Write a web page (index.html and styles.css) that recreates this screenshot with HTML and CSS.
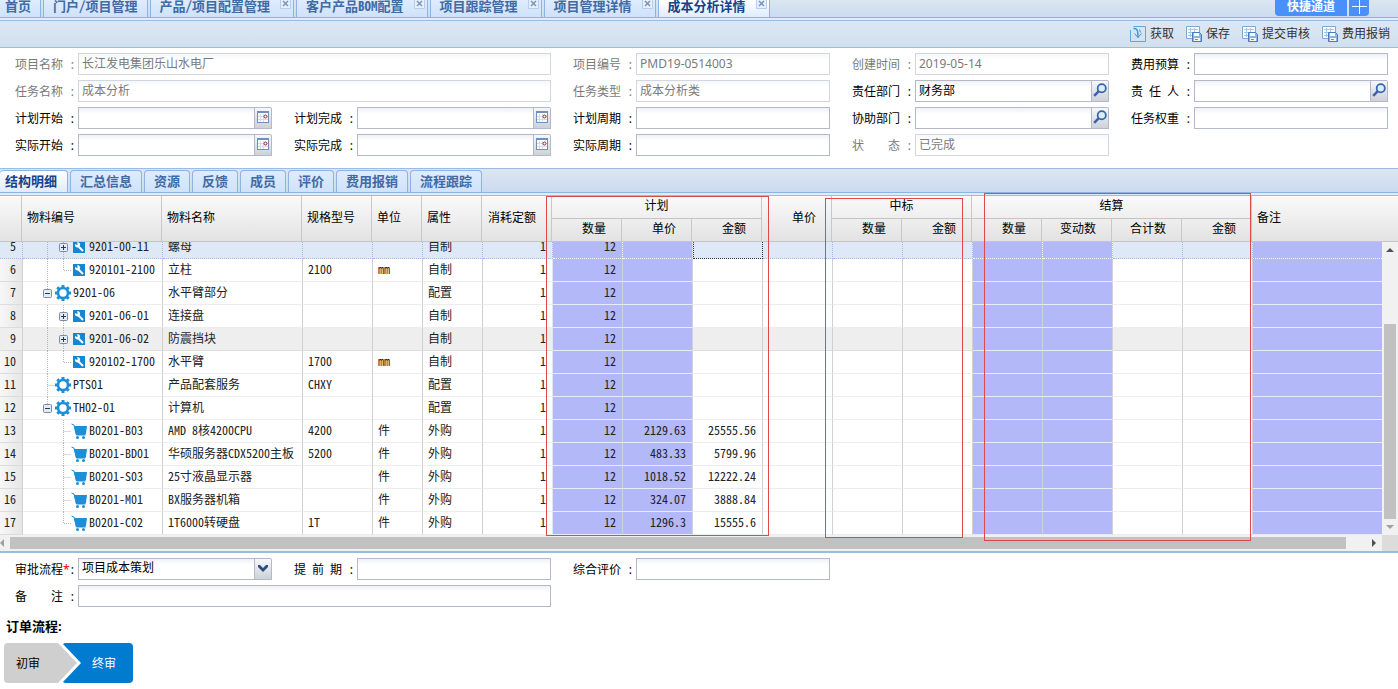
FILE: index.html
```html
<!DOCTYPE html>
<html lang="zh-CN">
<head>
    <meta charset="UTF-8">
    <meta name="viewport" content="width=device-width, initial-scale=1.0">
    <title>成本分析详情</title>
    <link rel="stylesheet" href="styles.css">
</head>
<body>
<svg class="sprite" aria-hidden="true">
    <!-- tree lines, one row high -->
    <symbol id="t-line" viewBox="0 0 16 23"><path class="dots" d="M8.5 0V23"/></symbol>
    <symbol id="t-elbow" viewBox="0 0 16 23"><path class="dots" d="M8.5 0V23M8.5 11.5H16"/></symbol>
    <symbol id="t-end" viewBox="0 0 16 23"><path class="dots" d="M8.5 0V11.5H16"/></symbol>
    <symbol id="t-plus" viewBox="0 0 16 23"><path class="dots" d="M8.5 0V23"/><rect class="box" x="4.5" y="7.5" width="8" height="8" rx="1"/><path class="sign" d="M6 11.5H11M8.5 9V14"/></symbol>
    <symbol id="t-minus" viewBox="0 0 16 23"><path class="dots" d="M8.5 0V7"/><rect class="box" x="4.5" y="7.5" width="8" height="8" rx="1"/><path class="sign" d="M6 11.5H11"/></symbol>
    <!-- node icons -->
    <symbol id="i-gear" viewBox="0 0 16 16"><g fill="none" stroke="#1c8fd6"><circle cx="8" cy="8" r="5" stroke-width="2.600"/><path d="M8 0v3M8 13v3M0 8h3M13 8h3M2.300 2.300l2.200 2.200M11.500 11.500l2.200 2.200M2.300 13.700l2.200-2.200M11.500 4.500l2.200-2.200" stroke-width="3"/></g></symbol>
    <symbol id="i-wrench" viewBox="0 0 16 16"><rect x="2" y="2" width="12" height="12" fill="#1686d0"/><path d="M7.500 7.500L12 12" stroke="#fff" stroke-width="2"/><path d="M4 5l2 1 .8-.8L6 3.400c2.400-.3 3.600 1.200 3 3.200L7 8.600C5.200 8.800 3.600 7.400 4 5z" fill="#fff"/></symbol>
    <symbol id="i-cart" viewBox="0 0 16 16"><path d="M.5 1L3 2l2.500 10h9" fill="none" stroke="#1c8fd6"/><path d="M3 3H16L15 10.500 14 12H5z" fill="#1c8fd6"/><circle cx="6.500" cy="14.500" r="1.500" fill="#1c8fd6"/><circle cx="12.500" cy="14.500" r="1.500" fill="#1c8fd6"/></symbol>
    <!-- buttons -->
    <symbol id="i-fetch" viewBox="0 0 16 16"><path d="M3.500.5H15.500v15H.5V4" fill="none" stroke="#5aaade"/><path d="M3.500 2.500C7 2 8 4 8 11.500" fill="none" stroke="#3b97d6" stroke-width="1.500"/><path d="M4.500 7.500L8 11.500 11.500 7.500M9.500 3.500l1 3" fill="none" stroke="#3b97d6"/></symbol>
    <symbol id="i-save" viewBox="0 0 16 16"><path d="M.5.5h13v12H.5z" fill="#f8fbff" stroke="#7fa9d3"/><path d="M2 3.500h10M2 6.500h8M2 9.500h6M4.500 2v9M8.500 2v5" stroke="#a9c6e2"/><path d="M6.500 6.500h7l2 2v7h-9z" fill="#8fb4e4" stroke="#4a78bd"/><path d="M8 7h5v3H8z" fill="#fff"/><path d="M8 12h6v3H8z" fill="#f2f8e8"/><path d="M9 13h3v1H9z" fill="#6fb04c"/></symbol>
    <symbol id="i-date" viewBox="0 0 12 12"><rect x=".5" y=".5" width="11" height="11" fill="#fff" stroke="#6f8fbd"/><path d="M0 1h12" stroke="#6f8fbd" stroke-width="2"/><path d="M1 5.500h10M1 8.500h10M3.500 3v8M6.500 3v8" stroke="#d5dbe6"/><circle cx="8.500" cy="5.500" r="1.500" fill="#fff" stroke="#9c1c1c"/></symbol>
    <symbol id="i-search" viewBox="0 0 12 12"><path d="M5 7L1 11" stroke="#3c62a8" stroke-width="2.200"/><circle cx="7.500" cy="4.500" r="3.500" fill="#dcecfa" stroke="#3564ae" stroke-width="1.500"/></symbol>
    <symbol id="i-down" viewBox="0 0 12 12"><path d="M1 3h2l3 3 3-3h2v2L6 10 1 5z" fill="#2c4d80"/></symbol>
    <symbol id="i-close" viewBox="0 0 11 9"><path d="M.5 0V8.500H10.500V0" fill="#e6f0fd" stroke="#b6cdec"/><path d="M3 1l5 5M8 1L3 6" stroke="#7d93b5" stroke-width="1.500"/></symbol>
</svg>

<nav class="page-tabs">
    <a class="tab" href="#">首页</a>
    <a class="tab" href="#">门户/项目管理</a>
    <a class="tab closable" href="#">产品/项目配置管理<svg class="close"><use href="#i-close"/></svg></a>
    <a class="tab closable" href="#">客户产品BOM配置<svg class="close"><use href="#i-close"/></svg></a>
    <a class="tab closable" href="#">项目跟踪管理<svg class="close"><use href="#i-close"/></svg></a>
    <a class="tab closable" href="#">项目管理详情<svg class="close"><use href="#i-close"/></svg></a>
    <a class="tab closable active" href="#">成本分析详情<svg class="close"><use href="#i-close"/></svg></a>
    <div class="shortcut">
        <button type="button" class="shortcut-main">快捷通道</button>
        <button type="button" class="shortcut-add" aria-label="添加"><svg viewBox="0 0 15 15"><path d="M0 6.500H15M7.500 0V14" stroke="#fff"/></svg></button>
    </div>
</nav>
<div class="tab-strip-line"></div>

<div class="toolbar">
    <button type="button"><svg><use href="#i-fetch"/></svg>获取</button>
    <button type="button"><svg><use href="#i-save"/></svg>保存</button>
    <button type="button"><svg><use href="#i-save"/></svg>提交审核</button>
    <button type="button"><svg><use href="#i-save"/></svg>费用报销</button>
</div>

<form class="form main-form">
    <div class="field wide disabled"><label for="pname"><span>项目名称</span><b>:</b></label><input id="pname" type="text" value="长江发电集团乐山水电厂" disabled></div>
    <div class="field disabled"><label for="pcode"><span>项目编号</span><b>:</b></label><input id="pcode" type="text" value="PMD19-0514003" disabled></div>
    <div class="field disabled"><label for="created"><span>创建时间</span><b>:</b></label><input id="created" type="text" value="2019-05-14" disabled></div>
    <div class="field"><label for="budget"><span>费用预算</span><b>:</b></label><input id="budget" type="text"></div>

    <div class="field wide disabled"><label for="tname"><span>任务名称</span><b>:</b></label><input id="tname" type="text" value="成本分析" disabled></div>
    <div class="field disabled"><label for="ttype"><span>任务类型</span><b>:</b></label><input id="ttype" type="text" value="成本分析类" disabled></div>
    <div class="field"><label for="dept"><span>责任部门</span><b>:</b></label><input id="dept" type="text" value="财务部"><button type="button" class="trigger search" aria-label="查找"><svg><use href="#i-search"/></svg></button></div>
    <div class="field"><label for="owner"><span>责 任 人</span><b>:</b></label><input id="owner" type="text"><button type="button" class="trigger search" aria-label="查找"><svg><use href="#i-search"/></svg></button></div>

    <div class="field"><label for="pstart"><span>计划开始</span><b>:</b></label><input id="pstart" type="text"><button type="button" class="trigger" aria-label="选择日期"><svg><use href="#i-date"/></svg></button></div>
    <div class="field"><label for="pend"><span>计划完成</span><b>:</b></label><input id="pend" type="text"><button type="button" class="trigger" aria-label="选择日期"><svg><use href="#i-date"/></svg></button></div>
    <div class="field"><label for="pcycle"><span>计划周期</span><b>:</b></label><input id="pcycle" type="text"></div>
    <div class="field"><label for="assist"><span>协助部门</span><b>:</b></label><input id="assist" type="text"><button type="button" class="trigger search" aria-label="查找"><svg><use href="#i-search"/></svg></button></div>
    <div class="field"><label for="weight"><span>任务权重</span><b>:</b></label><input id="weight" type="text"></div>

    <div class="field"><label for="astart"><span>实际开始</span><b>:</b></label><input id="astart" type="text"><button type="button" class="trigger" aria-label="选择日期"><svg><use href="#i-date"/></svg></button></div>
    <div class="field"><label for="aend"><span>实际完成</span><b>:</b></label><input id="aend" type="text"><button type="button" class="trigger" aria-label="选择日期"><svg><use href="#i-date"/></svg></button></div>
    <div class="field"><label for="acycle"><span>实际周期</span><b>:</b></label><input id="acycle" type="text"></div>
    <div class="field disabled"><label for="status"><span>状 态</span><b>:</b></label><input id="status" type="text" value="已完成" disabled></div>
</form>

<nav class="detail-tabs">
    <a class="tab active" href="#">结构明细</a>
    <a class="tab" href="#">汇总信息</a>
    <a class="tab" href="#">资源</a>
    <a class="tab" href="#">反馈</a>
    <a class="tab" href="#">成员</a>
    <a class="tab" href="#">评价</a>
    <a class="tab" href="#">费用报销</a>
    <a class="tab" href="#">流程跟踪</a>
</nav>
<div class="tab-strip-line"></div>

<div class="grid">
    <table class="grid-head">
        <colgroup>
            <col class="w-num"><col class="w-code"><col class="w-code"><col class="w-std"><col class="w-unit"><col class="w-attr"><col class="w-std"><col class="w-std"><col class="w-std"><col class="w-std"><col class="w-std"><col class="w-std"><col class="w-std"><col class="w-std"><col class="w-std"><col class="w-std"><col class="w-std"><col>
        </colgroup>
        <thead>
        <tr>
            <th rowspan="2"></th>
            <th rowspan="2">物料编号</th>
            <th rowspan="2">物料名称</th>
            <th rowspan="2">规格型号</th>
            <th rowspan="2">单位</th>
            <th rowspan="2">属性</th>
            <th rowspan="2" class="num">消耗定额</th>
            <th colspan="3" class="group">计划</th>
            <th rowspan="2" class="num">单价</th>
            <th colspan="2" class="group">中标</th>
            <th colspan="4" class="group">结算</th>
            <th rowspan="2">备注</th>
        </tr>
        <tr>
            <th class="num">数量</th>
            <th class="num">单价</th>
            <th class="num">金额</th>
            <th class="num">数量</th>
            <th class="num">金额</th>
            <th class="num">数量</th>
            <th class="num">变动数</th>
            <th class="num">合计数</th>
            <th class="num">金额</th>
        </tr>
        </thead>
    </table>

    <div class="grid-view">
        <div class="grid-rows">
            <table class="grid-body">
                <colgroup>
                    <col class="w-num"><col class="w-code"><col class="w-code"><col class="w-std"><col class="w-unit"><col class="w-attr"><col class="w-std"><col class="w-std"><col class="w-std"><col class="w-std"><col class="w-std"><col class="w-std"><col class="w-std"><col class="w-std"><col class="w-std"><col class="w-std"><col class="w-std"><col>
                </colgroup>
                <tbody>
                <tr class="selected">
                    <td>5</td>
                    <td><div class="node"><svg class="t"><use href="#t-line"/></svg><svg class="t"><use href="#t-plus"/></svg><svg class="i"><use href="#i-wrench"/></svg>9201-00-11</div></td>
                    <td>螺母</td><td></td><td></td><td>自制</td><td>1</td>
                    <td>12</td><td></td><td class="focus"></td><td></td><td></td><td></td><td></td><td></td><td></td><td></td><td></td>
                </tr>
                <tr>
                    <td>6</td>
                    <td><div class="node"><svg class="t"><use href="#t-line"/></svg><svg class="t"><use href="#t-end"/></svg><svg class="i"><use href="#i-wrench"/></svg>920101-2100</div></td>
                    <td>立柱</td><td>2100</td><td>mm</td><td>自制</td><td>1</td>
                    <td>12</td><td></td><td></td><td></td><td></td><td></td><td></td><td></td><td></td><td></td><td></td>
                </tr>
                <tr>
                    <td>7</td>
                    <td><div class="node"><svg class="t"><use href="#t-minus"/></svg><svg class="i"><use href="#i-gear"/></svg>9201-06</div></td>
                    <td>水平臂部分</td><td></td><td></td><td>配置</td><td>1</td>
                    <td>12</td><td></td><td></td><td></td><td></td><td></td><td></td><td></td><td></td><td></td><td></td>
                </tr>
                <tr>
                    <td>8</td>
                    <td><div class="node"><svg class="t"><use href="#t-line"/></svg><svg class="t"><use href="#t-plus"/></svg><svg class="i"><use href="#i-wrench"/></svg>9201-06-01</div></td>
                    <td>连接盘</td><td></td><td></td><td>自制</td><td>1</td>
                    <td>12</td><td></td><td></td><td></td><td></td><td></td><td></td><td></td><td></td><td></td><td></td>
                </tr>
                <tr class="over">
                    <td>9</td>
                    <td><div class="node"><svg class="t"><use href="#t-line"/></svg><svg class="t"><use href="#t-plus"/></svg><svg class="i"><use href="#i-wrench"/></svg>9201-06-02</div></td>
                    <td>防震挡块</td><td></td><td></td><td>自制</td><td>1</td>
                    <td>12</td><td></td><td></td><td></td><td></td><td></td><td></td><td></td><td></td><td></td><td></td>
                </tr>
                <tr>
                    <td>10</td>
                    <td><div class="node"><svg class="t"><use href="#t-line"/></svg><svg class="t"><use href="#t-end"/></svg><svg class="i"><use href="#i-wrench"/></svg>920102-1700</div></td>
                    <td>水平臂</td><td>1700</td><td>mm</td><td>自制</td><td>1</td>
                    <td>12</td><td></td><td></td><td></td><td></td><td></td><td></td><td></td><td></td><td></td><td></td>
                </tr>
                <tr>
                    <td>11</td>
                    <td><div class="node"><svg class="t"><use href="#t-elbow"/></svg><svg class="i"><use href="#i-gear"/></svg>PTS01</div></td>
                    <td>产品配套服务</td><td>CHXY</td><td></td><td>配置</td><td>1</td>
                    <td>12</td><td></td><td></td><td></td><td></td><td></td><td></td><td></td><td></td><td></td><td></td>
                </tr>
                <tr>
                    <td>12</td>
                    <td><div class="node"><svg class="t"><use href="#t-minus"/></svg><svg class="i"><use href="#i-gear"/></svg>TH02-01</div></td>
                    <td>计算机</td><td></td><td></td><td>配置</td><td>1</td>
                    <td>12</td><td></td><td></td><td></td><td></td><td></td><td></td><td></td><td></td><td></td><td></td>
                </tr>
                <tr>
                    <td>13</td>
                    <td><div class="node"><svg class="t"></svg><svg class="t"><use href="#t-elbow"/></svg><svg class="i"><use href="#i-cart"/></svg>B0201-B03</div></td>
                    <td>AMD 8核4200CPU</td><td>4200</td><td>件</td><td>外购</td><td>1</td>
                    <td>12</td><td>2129.63</td><td>25555.56</td><td></td><td></td><td></td><td></td><td></td><td></td><td></td><td></td>
                </tr>
                <tr>
                    <td>14</td>
                    <td><div class="node"><svg class="t"></svg><svg class="t"><use href="#t-elbow"/></svg><svg class="i"><use href="#i-cart"/></svg>B0201-BD01</div></td>
                    <td>华硕服务器CDX5200主板</td><td>5200</td><td>件</td><td>外购</td><td>1</td>
                    <td>12</td><td>483.33</td><td>5799.96</td><td></td><td></td><td></td><td></td><td></td><td></td><td></td><td></td>
                </tr>
                <tr>
                    <td>15</td>
                    <td><div class="node"><svg class="t"></svg><svg class="t"><use href="#t-elbow"/></svg><svg class="i"><use href="#i-cart"/></svg>B0201-S03</div></td>
                    <td>25寸液晶显示器</td><td></td><td>件</td><td>外购</td><td>1</td>
                    <td>12</td><td>1018.52</td><td>12222.24</td><td></td><td></td><td></td><td></td><td></td><td></td><td></td><td></td>
                </tr>
                <tr>
                    <td>16</td>
                    <td><div class="node"><svg class="t"></svg><svg class="t"><use href="#t-elbow"/></svg><svg class="i"><use href="#i-cart"/></svg>B0201-M01</div></td>
                    <td>BX服务器机箱</td><td></td><td>件</td><td>外购</td><td>1</td>
                    <td>12</td><td>324.07</td><td>3888.84</td><td></td><td></td><td></td><td></td><td></td><td></td><td></td><td></td>
                </tr>
                <tr>
                    <td>17</td>
                    <td><div class="node"><svg class="t"></svg><svg class="t"><use href="#t-end"/></svg><svg class="i"><use href="#i-cart"/></svg>B0201-C02</div></td>
                    <td>1T6000转硬盘</td><td>1T</td><td>件</td><td>外购</td><td>1</td>
                    <td>12</td><td>1296.3</td><td>15555.6</td><td></td><td></td><td></td><td></td><td></td><td></td><td></td><td></td>
                </tr>
                </tbody>
            </table>
        </div>
        <div class="vscroll">
            <svg viewBox="0 0 16 16"><path d="M4 10L8 6l4 4z" fill="#505050"/></svg>
            <div class="thumb"></div>
            <svg viewBox="0 0 16 16"><path d="M4 6h8l-4 4z" fill="#a0a0a0"/></svg>
        </div>
    </div>
    <div class="hscroll">
        <svg class="left" viewBox="0 0 10 16"><path d="M4 4v8L0 8z" fill="#a0a0a0"/></svg>
        <div class="thumb"></div>
        <svg class="right" viewBox="0 0 36 16"><path d="M26 4v8l4-4z" fill="#505050"/></svg>
        <div class="corner"></div>
    </div>

    <!-- marked column groups -->
    <div class="mark mark-plan"></div>
    <div class="mark mark-bid"></div>
    <div class="mark mark-settle"></div>
</div>

<form class="form flow-form">
    <div class="field"><label for="flow"><span>审批流程</span><em>*</em><b>:</b></label><select id="flow"><option>项目成本策划</option></select><span class="trigger"><svg><use href="#i-down"/></svg></span></div>
    <div class="field"><label for="lead"><span>提 前 期</span><b>:</b></label><input id="lead" type="text"></div>
    <div class="field"><label for="review"><span>综合评价</span><b>:</b></label><input id="review" type="text"></div>
    <div class="field row-start"><label for="remark"><span>备 注</span><b>:</b></label><input id="remark" type="text"></div>
</form>

<h3 class="flow-title">订单流程:</h3>
<ol class="steps">
    <li>初审</li>
    <li class="current">终审</li>
</ol>
</body>
</html>
```
FILE: styles.css
```css
* {
    box-sizing: border-box;
}
body {
    margin: 0;
    background: #fff;
    color: #000;
    font-family: "Noto Sans", "Noto Sans CJK SC", sans-serif;
    font-size: 12px;
    line-height: 16px;
    overflow: hidden;
}
button, input, select {
    font: inherit;
    color: inherit;
    margin: 0;
}
.sprite {
    position: absolute;
    width: 0;
    height: 0;
}
.dots {
    fill: none;
    stroke: #b5b5b5;
    stroke-dasharray: 1 1;
}
.box {
    fill: #e4eaf4;
    stroke: #7d8ba5;
}
.sign {
    stroke: #26395c;
}

/* tabs */
.page-tabs, .detail-tabs {
    display: flex;
    background: linear-gradient(#dce6f2, #cbdbef);
    border-bottom: 1px solid #8db2e3;
    font-family: "Noto Sans CJK SC", sans-serif;
    font-feature-settings: "hwid";
    font-size: 13px;
    font-weight: bold;
}
.page-tabs {
    height: 18px;
    gap: 2px;
}
.detail-tabs {
    height: 25px;
    gap: 2px;
    padding-top: 1px;
    border-top: 1px solid #99bbe8;
}
.tab {
    position: relative;
    padding: 0 9px;
    border: 1px solid #8db2e3;
    border-bottom: 0;
    background: linear-gradient(#deecfd, #cfe2fb);
    color: #416aa3;
    text-decoration: none;
    white-space: nowrap;
}
.page-tabs .tab {
    border-top: 0;
    line-height: 12px;
}
.page-tabs .tab:first-child {
    padding-left: 5px;
    border-left: 0;
}
.page-tabs .closable {
    padding-right: 23px;
}
.detail-tabs .tab {
    border-radius: 4px 4px 0 0;
    line-height: 20px;
}
.detail-tabs .tab:first-child {
    padding-left: 5px;
    padding-right: 10px;
    border-left: 0;
}
.tab.active {
    background: linear-gradient(#fff, #deecfd);
    color: #15428b;
}
.close {
    position: absolute;
    top: 0;
    right: 2px;
    width: 11px;
    height: 9px;
}
.tab-strip-line {
    height: 3px;
    background: #deecfd;
    border-bottom: 1px solid #99bbe8;
}
.shortcut {
    display: flex;
    gap: 2px;
    height: 16px;
    margin-left: auto;
    margin-right: 29px;
}
.shortcut button {
    padding: 0;
    border: 0;
    background: #4a90fb;
    color: #fff;
    font-size: 12px;
    line-height: 12px;
}
.shortcut .shortcut-main {
    display: flex;
    justify-content: center;
    width: 72px;
    border-radius: 0 0 0 4px;
}
.shortcut .shortcut-add {
    display: flex;
    justify-content: center;
    width: 20px;
    border-radius: 0 0 4px 0;
}
.shortcut-add svg {
    width: 15px;
    height: 15px;
}

/* toolbar */
.toolbar {
    display: flex;
    justify-content: flex-end;
    gap: 12px;
    height: 27px;
    padding-right: 8px;
    background: linear-gradient(#dbe7f4, #d2e0ee);
    border-bottom: 1px solid #99bbe8;
}
.toolbar button {
    display: flex;
    align-items: center;
    gap: 4px;
    padding: 0;
    border: 0;
    background: none;
    color: #333;
}
.toolbar svg {
    width: 16px;
    height: 16px;
}

/* forms */
.form {
    display: grid;
    grid-template-columns: repeat(5, 1fr);
    gap: 5px 22px;
    padding: 5px 10px 12px 15px;
}
.field {
    display: flex;
    height: 22px;
    min-width: 0;
}
.wide {
    grid-column: span 2;
}
.row-start {
    grid-column: 1 / span 2;
}
.field label {
    display: flex;
    flex: none;
    width: 63px;
    padding-right: 4px;
    line-height: 24px;
}
.field label span {
    width: 48px;
    text-align-last: justify;
    white-space: nowrap;
}
.field label b {
    margin-left: auto;
    font-weight: normal;
}
.field label em {
    color: #e00;
    font-style: normal;
}
.field input, .field select {
    flex: 1;
    min-width: 0;
    height: 22px;
    padding: 0 3px 2px;
    border: 1px solid #b5b8c8;
    border-radius: 0;
    background: linear-gradient(#eef1f5, #fff 6px);
    appearance: none;
    outline: 0;
}
.field.disabled, .disabled input {
    color: #7a7a7a;
}
.field.disabled input {
    border-color: #d3d6de;
    background: linear-gradient(#f5f7f9, #fff 6px);
}
.trigger {
    display: flex;
    flex: none;
    align-items: center;
    justify-content: center;
    width: 17px;
    height: 22px;
    padding: 0 0 2px;
    border: 1px solid #b5b8c8;
    border-left: 0;
    border-radius: 0 2px 0 0;
    background: linear-gradient(#f5f7fa, #cdd1d9);
}
.trigger svg {
    width: 12px;
    height: 12px;
}
.search svg {
    width: 14px;
    height: 14px;
}

/* grid */
.grid {
    position: relative;
    border-bottom: 2px solid #99bbdd;
}
table {
    width: 100%;
    table-layout: fixed;
    border-collapse: separate;
    border-spacing: 0;
}
.w-num {
    width: 22px;
}
.grid-body .w-num {
    width: 23px;
}
.w-code {
    width: 140px;
}
.w-std {
    width: 70px;
}
.w-unit {
    width: 50px;
}
.w-attr {
    width: 60px;
}
.grid-head {
    background: linear-gradient(#fafafa, #e3e2e2);
}
.grid-head th {
    height: 23px;
    padding: 0 5px 2px;
    border-right: 1px solid #c8c8c8;
    border-bottom: 1px solid #c5c5c5;
    font-weight: normal;
    line-height: 16px;
    text-align: left;
    white-space: nowrap;
}
.grid-head th:last-child[rowspan] {
    border-right: 0;
}
.grid-head th.num {
    padding-right: 15px;
    text-align: right;
}
.grid-head th.group {
    text-align: center;
}
/* scrolled to the last row, so the first one is cut at the top */
.grid-view {
    display: flex;
    height: 293px;
}
.grid-rows {
    display: flex;
    flex: 1;
    align-items: flex-end;
    min-width: 0;
    overflow: hidden;
}
.grid-body {
    font-family: "Noto Sans CJK SC", sans-serif;
    font-feature-settings: "hwid";
    color: #222;
}
.grid-body td {
    height: 23px;
    padding: 0 6px 2px 5px;
    border-right: 1px solid #d0d0d0;
    border-bottom: 1px solid #ededed;
    line-height: 20px;
    white-space: nowrap;
}
.grid-body td:first-child {
    padding: 0 6px 2px 0;
    background: linear-gradient(90deg, #f7f7f7, #e6e6e6);
    border-bottom-color: #dcdcdc;
    text-align: right;
}
.grid-body td:nth-child(2) {
    padding: 0;
}
.grid-body td:nth-child(n+7) {
    text-align: right;
}
.grid-body td:nth-child(7) {
    border-right-color: #e4e4f4;
}
.grid-body .over td {
    background: #eee;
    border-bottom-color: #ddd;
}
.grid-body .selected td {
    background: #dfe8f6;
    border-right-style: dotted;
    border-right-color: #a3bae9;
    border-bottom: 1px dotted #a3bae9;
}
.grid-body td:nth-child(8), .grid-body td:nth-child(9),
.grid-body td:nth-child(14), .grid-body td:nth-child(15),
.grid-body td:nth-child(18),
.grid-body .over td:nth-child(8), .grid-body .over td:nth-child(9),
.grid-body .over td:nth-child(14), .grid-body .over td:nth-child(15),
.grid-body .over td:nth-child(18) {
    background: #b2b8f8 padding-box;
    border-right-color: #d0d0e0;
    border-bottom-color: #e9eafa;
}
.grid-body .selected td:nth-child(8), .grid-body .selected td:nth-child(9),
.grid-body .selected td:nth-child(14), .grid-body .selected td:nth-child(15),
.grid-body .selected td:nth-child(18) {
    background: #b2b8f8;
    border-right-color: #fff;
    border-bottom-color: #fff;
}
.grid-body td:last-child, .grid-body .selected td:last-child {
    border-right: 0;
}
.grid-body .selected .focus {
    border: 1px dotted #333;
    border-top: 0;
}
.node {
    display: flex;
    height: 22px;
    padding-left: 16px;
    line-height: 20px;
}
.node svg {
    flex: none;
    width: 16px;
}
.node .t {
    height: 23px;
}
.node .i {
    height: 16px;
    margin: 3px 2px 0 0;
}

/* scrollbars */
.vscroll {
    display: flex;
    flex-direction: column;
    flex: none;
    width: 16px;
    background: #f1f1f1;
}
.vscroll svg {
    width: 16px;
    height: 16px;
}
.vscroll .thumb {
    height: 195px;
    margin: auto 2px 0;
    background: #c1c1c1;
}
.hscroll {
    display: flex;
    height: 16px;
    background: #f1f1f1;
}
.hscroll svg {
    flex: none;
    height: 16px;
}
.hscroll .left {
    width: 10px;
}
.hscroll .right {
    width: 36px;
}
.hscroll .thumb {
    flex: 1;
    margin: 2px 0;
    background: #c1c1c1;
}
.hscroll .corner {
    width: 16px;
    background: #dcdcdc;
}

.mark {
    position: absolute;
    border: 1px solid #dc4a4a;
    pointer-events: none;
}
.mark-plan {
    top: 0;
    left: 546px;
    width: 223px;
    height: 340px;
}
.mark-bid {
    top: 2px;
    left: 825px;
    width: 138px;
    height: 340px;
}
.mark-settle {
    top: -3px;
    left: 984px;
    width: 267px;
    height: 348px;
}

/* approval flow */
.flow-form {
    padding-bottom: 10px;
}
.flow-title {
    margin: 0 0 8px 6px;
    font-size: 13px;
    line-height: 18px;
}
.steps {
    display: flex;
    margin: 0;
    padding: 0 4px;
    list-style: none;
    line-height: 42px;
}
.steps li {
    width: 73px;
    height: 40px;
    padding-left: 12px;
    background: #cfcfcf;
    border-radius: 4px;
    clip-path: polygon(0 0, 54px 0, 100% 50%, 54px 100%, 0 100%);
}
.steps .current {
    width: 71px;
    margin-left: -15px;
    padding-left: 30px;
    background: #007bd0;
    color: #fff;
    clip-path: polygon(0 0, 100% 0, 100% 100%, 0 100%, 19px 50%);
}
```
